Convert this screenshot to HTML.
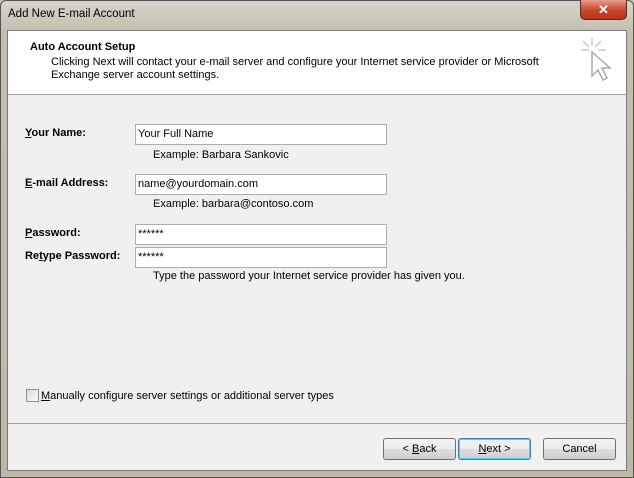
<!DOCTYPE html>
<html><head><style>
*{margin:0;padding:0;box-sizing:border-box}
body{width:634px;height:478px;overflow:hidden;background:#c9c3b3;font-family:"Liberation Sans",sans-serif;font-size:11px;color:#000;position:relative}
.frame{position:absolute;left:0;top:0;width:634px;height:478px;background:linear-gradient(180deg,#d8d4cc 0,#c4bfae 30px,#bdb7a4 100%);border:1px solid #555;border-radius:6px 6px 0 0}
.title{position:absolute;left:8px;top:8px;font-size:11.5px;color:#000}
.close{position:absolute;left:580px;top:0;width:47px;height:20px;border:1px solid #5a2a20;border-top:none;border-radius:0 0 5px 5px;background:linear-gradient(#e8a090,#c8492e 50%,#b83218);color:#fff;font-weight:bold;font-size:13px;text-align:center;line-height:19px}
.inner{position:absolute;left:7px;top:30px;width:620px;height:441px;background:#f0f0f0;border:1px solid #7a7a7a}
.head{position:absolute;left:0;top:0;width:618px;height:64px;background:#fff;border-bottom:1px solid #a0a0a0}
.t{position:absolute;white-space:nowrap}
.b{font-weight:bold}
.in{position:absolute;left:127px;width:252px;height:21px;background:#fff;border:1px solid #abadb3;padding:3px 2px;font-size:11px}
.sep{position:absolute;left:0;top:392px;width:618px;height:1px;background:#a0a0a0}
.btn{position:absolute;top:407px;width:73px;height:22px;border:1px solid #707070;border-radius:3px;background:linear-gradient(#f2f2f2 0,#ebebeb 50%,#dddddd 51%,#cfcfcf 100%);text-align:center;line-height:20px;font-size:11px}
u{text-decoration:underline}
</style></head><body>
<div class="frame"></div>
<div class="title">Add New E-mail Account</div>
<div class="close">✕</div>
<div class="inner">
 <div class="head">
  <div class="t b" style="left:22px;top:10px;font-size:11px">Auto Account Setup</div>
  <div class="t" style="left:43px;top:25px">Clicking Next will contact your e-mail server and configure your Internet service provider or Microsoft</div>
  <div class="t" style="left:43px;top:38px">Exchange server account settings.</div>
  <svg style="position:absolute;left:570px;top:5px" width="36" height="48" viewBox="0 0 36 48"><g stroke="#c8c8c8" stroke-width="1.5" fill="none"><path d="M14 2v8M3 14h8M5 5l6 6M23 5l-6 6M20 14h8"/><path d="M14 16v24l6-6 5 10 4-2-5-10h8z" fill="#fff" stroke="#aaa"/></g></svg>
 </div>
 <div class="t b" style="left:17px;top:96px"><u>Y</u>our Name:</div>
 <div class="in" style="top:93px">Your Full Name</div>
 <div class="t" style="left:145px;top:118px">Example: Barbara Sankovic</div>
 <div class="t b" style="left:17px;top:146px"><u>E</u>-mail Address:</div>
 <div class="in" style="top:143px">name@yourdomain.com</div>
 <div class="t" style="left:145px;top:167px">Example: barbara@contoso.com</div>
 <div class="t b" style="left:17px;top:196px"><u>P</u>assword:</div>
 <div class="in" style="top:193px">******</div>
 <div class="t b" style="left:17px;top:219px">Re<u>t</u>ype Password:</div>
 <div class="in" style="top:216px">******</div>
 <div class="t" style="left:145px;top:239px">Type the password your Internet service provider has given you.</div>
 <div style="position:absolute;left:18px;top:358px;width:13px;height:13px;border:1px solid #8f8f8f;background:linear-gradient(135deg,#dcdcdc,#fafafa)"></div>
 <div class="t" style="left:33px;top:359px"><u>M</u>anually configure server settings or additional server types</div>
 <div class="sep"></div>
 <div class="btn" style="left:375px">&lt; <u>B</u>ack</div>
 <div class="btn" style="left:450px;border-color:#3c7fb1;box-shadow:inset 0 0 0 1px #48d4ff"><u>N</u>ext &gt;</div>
 <div class="btn" style="left:535px">Cancel</div>
</div>
</body></html>
